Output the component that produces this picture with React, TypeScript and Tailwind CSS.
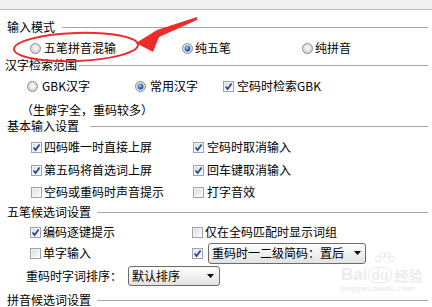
import React from "react";

function Radio({ checked }: { checked?: boolean }) {
  return (
    <svg width="11" height="11" viewBox="0 0 11 11" className="shrink-0">
      <defs>
        <radialGradient id="rg" cx="50%" cy="45%" r="60%">
          <stop offset="0%" stopColor="#ffffff" />
          <stop offset="100%" stopColor="#c9c9c9" />
        </radialGradient>
        <radialGradient id="rb" cx="40%" cy="35%" r="65%">
          <stop offset="0%" stopColor="#8fd0ff" />
          <stop offset="100%" stopColor="#0a3c8a" />
        </radialGradient>
      </defs>
      <circle cx="5.5" cy="5.5" r="5" fill="url(#rg)" stroke="#8e8e8e" strokeWidth="1" />
      {checked && <circle cx="5.5" cy="5.5" r="2.9" fill="url(#rb)" />}
    </svg>
  );
}

function Check({ checked }: { checked?: boolean }) {
  return (
    <svg width="11" height="11" viewBox="0 0 11 11" className="shrink-0">
      <defs>
        <linearGradient id="cg" x1="0" y1="0" x2="1" y2="1">
          <stop offset="0%" stopColor="#dcdcdc" />
          <stop offset="100%" stopColor="#fbfbfb" />
        </linearGradient>
      </defs>
      <rect x="0.5" y="0.5" width="10" height="10" fill="#ffffff" stroke="#9ba3ac" />
      <rect x="1.5" y="1.5" width="8" height="8" fill="url(#cg)" />
      {checked && (
        <path d="M2.6 5.4 L4.6 8 L8.6 2.4" fill="none" stroke="#22479c" strokeWidth="1.7" />
      )}
    </svg>
  );
}

function DownArrow() {
  return (
    <svg width="7" height="4" viewBox="0 0 7 4" className="shrink-0">
      <polygon points="0,0 7,0 3.5,4" fill="#000" />
    </svg>
  );
}

function Header({ text, pl, gap }: { text: string; pl: string; gap: string }) {
  return (
    <div className={`flex items-center h-[16px] pr-[4px] ${pl}`}>
      <span className="shrink-0">{text}</span>
      <div className={`flex-1 h-px bg-[#a6a6a6] ${gap}`} />
    </div>
  );
}

export default function App() {
  return (
    <div className="relative w-[432px] h-[307px] overflow-hidden bg-white text-black text-[12px] leading-[16px] font-['Noto_Sans_CJK_SC','Noto_Sans',sans-serif]">
      <div className="h-[10px] bg-[#f0f0f0] border-b border-[#b7c3bf]" />

      <div className="mt-[9px]">
        <Header text="输入模式" pl="pl-[7px]" gap="ml-[7px]" />
      </div>

      <div className="mt-[5px] flex items-center h-[16px] pl-[30px]">
        <div className="flex items-center w-[152px]">
          <Radio />
          <span className="ml-[3px]">五笔拼音混输</span>
        </div>
        <div className="flex items-center w-[120px]">
          <Radio checked />
          <span className="ml-[2px]">纯五笔</span>
        </div>
        <div className="flex items-center">
          <Radio />
          <span className="ml-[2px]">纯拼音</span>
        </div>
      </div>

      <div className="mt-[1px]">
        <Header text="汉字检索范围" pl="pl-[5px]" gap="ml-[2px]" />
      </div>

      <div className="mt-[5px] flex items-center h-[16px] pl-[27px]">
        <div className="flex items-center w-[108px]">
          <Radio />
          <span className="ml-[4px]">GBK汉字</span>
        </div>
        <div className="flex items-center w-[88px]">
          <Radio checked />
          <span className="ml-[4px]">常用汉字</span>
        </div>
        <div className="flex items-center">
          <Check checked />
          <span className="ml-[3px]">空码时检索GBK</span>
        </div>
      </div>

      <div className="mt-[8px] h-[16px] pl-[21px]">（生僻字全，重码较多）</div>

      <Header text="基本输入设置" pl="pl-[7px]" gap="ml-[11px]" />

      <div className="mt-[5px] flex items-center h-[16px] pl-[31px]">
        <div className="flex items-center w-[162px]">
          <Check checked />
          <span className="ml-[2px]">四码唯一时直接上屏</span>
        </div>
        <div className="flex items-center">
          <Check checked />
          <span className="ml-[3px]">空码时取消输入</span>
        </div>
      </div>

      <div className="mt-[7px] flex items-center h-[16px] pl-[31px]">
        <div className="flex items-center w-[162px]">
          <Check checked />
          <span className="ml-[2px]">第五码将首选词上屏</span>
        </div>
        <div className="flex items-center">
          <Check checked />
          <span className="ml-[3px]">回车键取消输入</span>
        </div>
      </div>

      <div className="mt-[6px] flex items-center h-[16px] pl-[31px]">
        <div className="flex items-center w-[162px]">
          <Check />
          <span className="ml-[2px]">空码或重码时声音提示</span>
        </div>
        <div className="flex items-center">
          <Check />
          <span className="ml-[3px]">打字音效</span>
        </div>
      </div>

      <div className="mt-[4px]">
        <Header text="五笔候选词设置" pl="pl-[7px]" gap="ml-[6px]" />
      </div>

      <div className="mt-[4px] flex items-center h-[16px] pl-[30px]">
        <div className="flex items-center w-[162px]">
          <Check checked />
          <span className="ml-[2px]">编码逐键提示</span>
        </div>
        <div className="flex items-center">
          <Check />
          <span className="ml-[2px]">仅在全码匹配时显示词组</span>
        </div>
      </div>

      <div className="mt-[5px] flex items-center h-[16px] pl-[30px]">
        <div className="flex items-center w-[162px]">
          <Check />
          <span className="ml-[2px]">单字输入</span>
        </div>
        <div className="flex items-center">
          <Check checked />
          <div className="ml-[5px] flex items-center w-[158px] h-[21px] border border-[#6b6b6b] rounded-[3px] bg-linear-to-b from-white to-[#e2e2e2] pl-[3px] pr-[4px]">
            <span className="flex-1">重码时一二级简码：置后</span>
            <DownArrow />
          </div>
        </div>
      </div>

      <div className="mt-[7px] flex items-center h-[16px] pl-[26px]">
        <span>重码时字词排序：</span>
        <div className="ml-[6px] flex items-center w-[92px] h-[20px] border border-[#6b6b6b] rounded-[3px] bg-linear-to-b from-white to-[#e2e2e2] pl-[3px] pr-[5px]">
          <span className="flex-1">默认排序</span>
          <DownArrow />
        </div>
      </div>

      <div className="mt-[8px]">
        <Header text="拼音候选词设置" pl="pl-[7px]" gap="ml-[6px]" />
      </div>

      {/* Baidu watermark */}
      <div className="absolute left-[341px] top-[250px] w-[90px] h-[44px] pointer-events-none text-[#ececec] font-['Liberation_Sans',sans-serif]">
        <svg width="22" height="16" viewBox="0 0 22 16" className="absolute left-[33px] top-[2px]">
          <g fill="none" stroke="#e8e8e8" strokeWidth="1">
            <ellipse cx="4" cy="7" rx="2.5" ry="3" />
            <ellipse cx="8.5" cy="3" rx="2.5" ry="2.5" />
            <ellipse cx="13.5" cy="3" rx="2.5" ry="2.5" />
            <ellipse cx="18" cy="7" rx="2.5" ry="3" />
          </g>
        </svg>
        <div className="absolute left-0 top-[16px] flex items-end text-[17px] leading-[17px] font-bold">
          <span>Bai</span>
          <span className="ml-[1px] px-[2px] rounded-full border border-[#e8e8e8] text-[14px] leading-[14px]">du</span>
          <span className="ml-[3px] text-[14px] leading-[16px] font-['Noto_Sans_CJK_SC',sans-serif]">经验</span>
        </div>
        <div className="absolute left-0 top-[34px] text-[8px] leading-[9px] font-bold tracking-[0.2px]">jingyan.baidu.com</div>
      </div>

      {/* red annotation */}
      <svg width="432" height="307" viewBox="0 0 432 307" className="absolute left-0 top-0 pointer-events-none">
        <ellipse cx="76" cy="47" rx="62" ry="14" fill="none" stroke="#ec2b2b" strokeWidth="2" transform="rotate(-2 76 47)" />
        <polygon points="136,43 157,30 197,17 197,20 159,37 153,52" fill="#ec2b2b" />
      </svg>
    </div>
  );
}
